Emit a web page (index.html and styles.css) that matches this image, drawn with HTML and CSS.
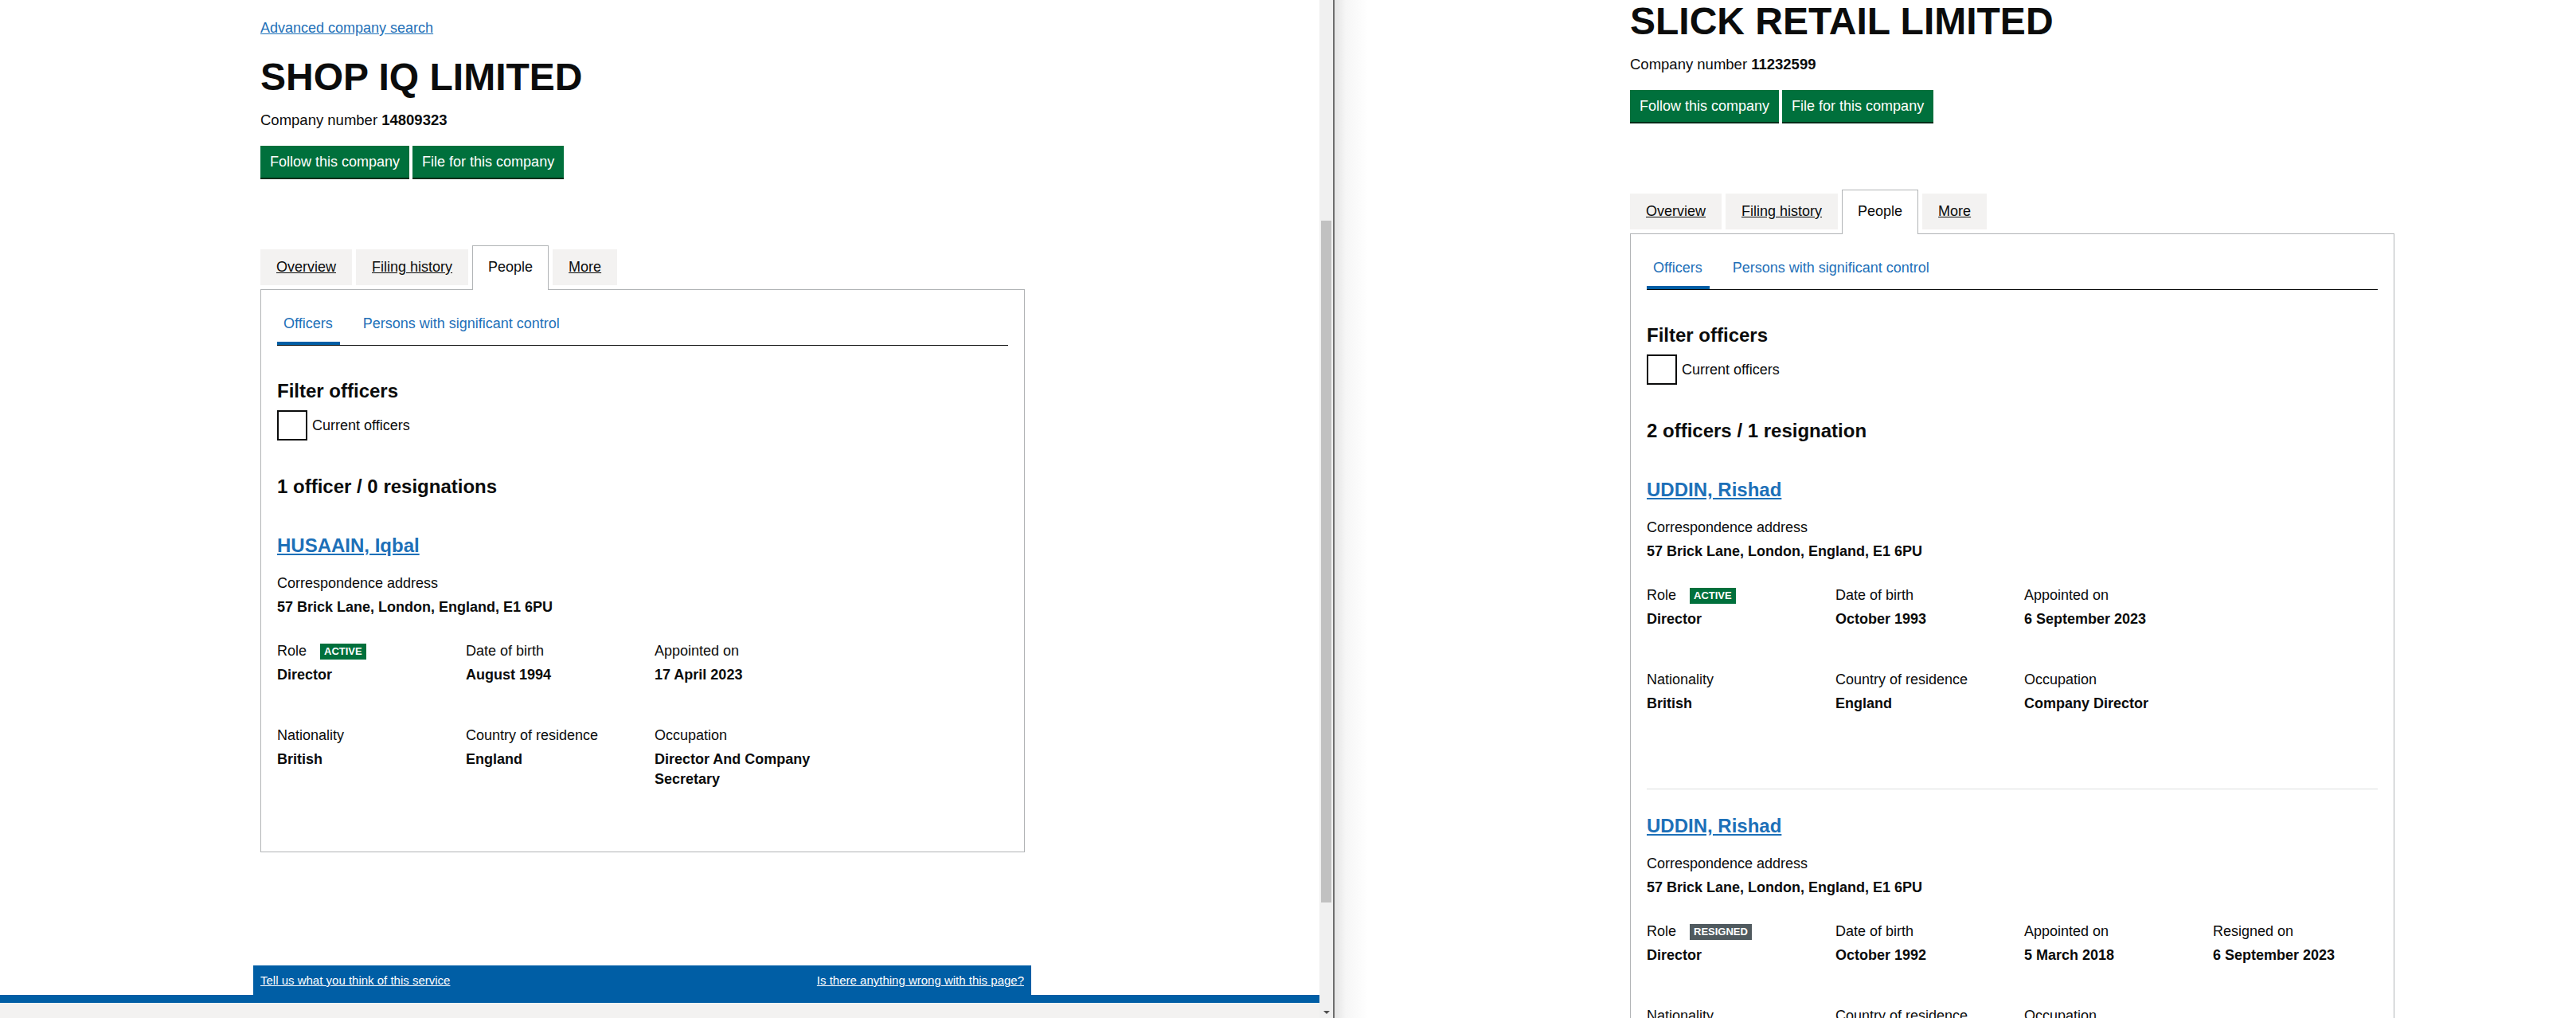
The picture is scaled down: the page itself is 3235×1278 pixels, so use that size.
FILE: index.html
```html
<!DOCTYPE html>
<html lang="en">
<head>
    <meta charset="UTF-8">
    <meta name="viewport" content="width=device-width, initial-scale=1.0">
    <title>People - Companies House</title>
    <link rel="stylesheet" href="styles.css">
</head>
<body>
<div class="screen">

    <!-- Left window: SHOP IQ LIMITED -->
    <div class="pane pane-left">
        <main class="page">
            <a class="back-link" href="#">Advanced company search</a>
            <h1 class="company-name">SHOP IQ LIMITED</h1>
            <p class="company-number">Company number <strong>14809323</strong></p>
            <div class="actions">
                <a class="button" href="#">Follow this company</a>
                <a class="button" href="#">File for this company</a>
            </div>

            <ul class="tabs">
                <li class="tab"><a href="#">Overview</a></li>
                <li class="tab"><a href="#">Filing history</a></li>
                <li class="tab tab-selected">People</li>
                <li class="tab"><a href="#">More</a></li>
            </ul>

            <div class="panel">
                <ul class="subnav">
                    <li class="subnav-item subnav-selected">Officers</li>
                    <li class="subnav-item">Persons with significant control</li>
                </ul>

                <h2 class="heading-m filter-heading">Filter officers</h2>
                <label class="checkbox">
                    <span class="checkbox-box"></span>
                    <span class="checkbox-label">Current officers</span>
                </label>

                <h2 class="heading-m count-heading">1 officer / 0 resignations</h2>

                <div class="officer">
                    <h3 class="officer-name"><a href="#">HUSAAIN, Iqbal</a></h3>
                    <div class="field address">
                        <div class="field-label">Correspondence address</div>
                        <div class="field-value">57 Brick Lane, London, England, E1 6PU</div>
                    </div>
                    <div class="details-row">
                        <div class="field">
                            <div class="field-label">Role <span class="tag tag-active">Active</span></div>
                            <div class="field-value">Director</div>
                        </div>
                        <div class="field">
                            <div class="field-label">Date of birth</div>
                            <div class="field-value">August 1994</div>
                        </div>
                        <div class="field">
                            <div class="field-label">Appointed on</div>
                            <div class="field-value">17 April 2023</div>
                        </div>
                    </div>
                    <div class="details-row">
                        <div class="field">
                            <div class="field-label">Nationality</div>
                            <div class="field-value">British</div>
                        </div>
                        <div class="field">
                            <div class="field-label">Country of residence</div>
                            <div class="field-value">England</div>
                        </div>
                        <div class="field">
                            <div class="field-label">Occupation</div>
                            <div class="field-value">Director And Company Secretary</div>
                        </div>
                    </div>
                </div>
            </div>
        </main>

        <footer class="footer">
            <div class="feedback">
                <a href="#">Tell us what you think of this service</a>
                <a href="#">Is there anything wrong with this page?</a>
            </div>
            <div class="footer-rule"></div>
            <div class="footer-base"></div>
        </footer>
    </div>

    <div class="scrollbar">
        <div class="scrollbar-thumb"></div>
        <div class="scrollbar-arrow"></div>
    </div>
    <div class="divider"></div>

    <!-- Right window: SLICK RETAIL LIMITED, scrolled a little -->
    <div class="pane pane-right">
        <main class="page page-scrolled">
            <a class="back-link" href="#">Advanced company search</a>
            <h1 class="company-name">SLICK RETAIL LIMITED</h1>
            <p class="company-number">Company number <strong>11232599</strong></p>
            <div class="actions">
                <a class="button" href="#">Follow this company</a>
                <a class="button" href="#">File for this company</a>
            </div>

            <ul class="tabs">
                <li class="tab"><a href="#">Overview</a></li>
                <li class="tab"><a href="#">Filing history</a></li>
                <li class="tab tab-selected">People</li>
                <li class="tab"><a href="#">More</a></li>
            </ul>

            <div class="panel">
                <ul class="subnav">
                    <li class="subnav-item subnav-selected">Officers</li>
                    <li class="subnav-item">Persons with significant control</li>
                </ul>

                <h2 class="heading-m filter-heading">Filter officers</h2>
                <label class="checkbox">
                    <span class="checkbox-box"></span>
                    <span class="checkbox-label">Current officers</span>
                </label>

                <h2 class="heading-m count-heading">2 officers / 1 resignation</h2>

                <div class="officer">
                    <h3 class="officer-name"><a href="#">UDDIN, Rishad</a></h3>
                    <div class="field address">
                        <div class="field-label">Correspondence address</div>
                        <div class="field-value">57 Brick Lane, London, England, E1 6PU</div>
                    </div>
                    <div class="details-row">
                        <div class="field">
                            <div class="field-label">Role <span class="tag tag-active">Active</span></div>
                            <div class="field-value">Director</div>
                        </div>
                        <div class="field">
                            <div class="field-label">Date of birth</div>
                            <div class="field-value">October 1993</div>
                        </div>
                        <div class="field">
                            <div class="field-label">Appointed on</div>
                            <div class="field-value">6 September 2023</div>
                        </div>
                    </div>
                    <div class="details-row">
                        <div class="field">
                            <div class="field-label">Nationality</div>
                            <div class="field-value">British</div>
                        </div>
                        <div class="field">
                            <div class="field-label">Country of residence</div>
                            <div class="field-value">England</div>
                        </div>
                        <div class="field">
                            <div class="field-label">Occupation</div>
                            <div class="field-value">Company Director</div>
                        </div>
                    </div>
                </div>

                <div class="officer">
                    <h3 class="officer-name"><a href="#">UDDIN, Rishad</a></h3>
                    <div class="field address">
                        <div class="field-label">Correspondence address</div>
                        <div class="field-value">57 Brick Lane, London, England, E1 6PU</div>
                    </div>
                    <div class="details-row">
                        <div class="field">
                            <div class="field-label">Role <span class="tag tag-resigned">Resigned</span></div>
                            <div class="field-value">Director</div>
                        </div>
                        <div class="field">
                            <div class="field-label">Date of birth</div>
                            <div class="field-value">October 1992</div>
                        </div>
                        <div class="field">
                            <div class="field-label">Appointed on</div>
                            <div class="field-value">5 March 2018</div>
                        </div>
                        <div class="field">
                            <div class="field-label">Resigned on</div>
                            <div class="field-value">6 September 2023</div>
                        </div>
                    </div>
                    <div class="details-row">
                        <div class="field">
                            <div class="field-label">Nationality</div>
                            <div class="field-value">British</div>
                        </div>
                        <div class="field">
                            <div class="field-label">Country of residence</div>
                            <div class="field-value">England</div>
                        </div>
                        <div class="field">
                            <div class="field-label">Occupation</div>
                            <div class="field-value">Company Director</div>
                        </div>
                    </div>
                </div>
            </div>
        </main>
    </div>

</div>
</body>
</html>
```

FILE: styles.css
```css
* {
    box-sizing: border-box;
}
html, body {
    margin: 0;
    padding: 0;
    height: 1278px;
    overflow: hidden;
    background: #fff;
}
body {
    font-family: "Liberation Sans", Arial, sans-serif;
    font-size: 18px;
    line-height: 25px;
    color: #0b0c0c;
}
a {
    color: #1d70b8;
}
ul {
    list-style: none;
    margin: 0;
    padding: 0;
}
h1, h2, h3, p {
    margin: 0;
}

.screen {
    display: flex;
    height: 1278px;
}
.pane {
    height: 1278px;
    overflow: hidden;
}
.pane-left {
    width: 1657px;
    flex: none;
    display: flex;
    flex-direction: column;
}
.pane-left .page {
    flex: 1;
    overflow: hidden;
    margin-left: 327px;
}
.pane-right {
    flex: 1;
    background: linear-gradient(to right, #e4e4e4 0, #f6f6f6 14px, #fff 42px);
}
.pane-right .page {
    margin-left: 371px;
}

/* window chrome between the two panes */
.scrollbar {
    width: 17px;
    flex: none;
    background: #f0f0f0;
    display: flex;
    flex-direction: column;
}
.scrollbar-thumb {
    margin: 277px 2px 0 2px;
    height: 856px;
    background: #c1c1c1;
}
.scrollbar-arrow {
    margin: auto auto 5px;
    width: 0;
    height: 0;
    border-top: 4px solid #505050;
    border-left: 4px solid transparent;
    border-right: 4px solid transparent;
}
.divider {
    width: 2px;
    flex: none;
    background: #6e6e6e;
}

/* page */
.page {
    width: 960px;
    padding-top: 23px;
}
.page-scrolled {
    margin-top: -70px;
}
.back-link {
    display: inline-block;
    font-size: 18px;
    line-height: 25px;
}
.company-name {
    margin-top: 24px;
    font-size: 48px;
    line-height: 50px;
    font-weight: 700;
}
.company-number {
    margin-top: 16px;
    font-size: 18.5px;
}
.actions {
    display: flex;
    gap: 4px;
    margin-top: 20px;
}
.button {
    display: inline-block;
    height: 40px;
    padding: 9px 12px;
    font-size: 18px;
    line-height: 22px;
    color: #fff;
    text-decoration: none;
    background: #00703c;
    box-shadow: 0 2px 0 #002d18;
}

.tabs {
    display: flex;
    align-items: flex-start;
    margin-top: 90px;
}
.tab {
    margin-right: 5px;
    padding: 10px 20px;
    background: #f3f2f1;
}
.tab a {
    color: #0b0c0c;
}
.tab-selected {
    position: relative;
    z-index: 1;
    margin-top: -5px;
    margin-bottom: -1px;
    padding: 14px 19px 16px;
    border: 1px solid #b1b4b6;
    border-bottom: 0;
    background: #fff;
}

.panel {
    border: 1px solid #b1b4b6;
    padding: 30px 20px;
    background: #fff;
}
.subnav {
    display: flex;
    border-bottom: 1px solid #0b0c0c;
}
.subnav-item {
    margin-right: 20px;
    padding: 0 9px 10px;
    border-bottom: 4px solid transparent;
    color: #1d70b8;
}
.subnav-selected {
    padding: 0 9px 10px 8px;
    border-bottom-color: #005ea5;
}

.heading-m {
    font-size: 24px;
    line-height: 30px;
    font-weight: 700;
}
.filter-heading {
    margin-top: 42px;
}
.checkbox {
    display: flex;
    align-items: center;
    margin-top: 9px;
}
.checkbox-box {
    width: 38px;
    height: 38px;
    border: 2px solid #0b0c0c;
}
.checkbox-label {
    margin-left: 6px;
}
.count-heading {
    margin-top: 43px;
}

/* officer list */
.officer {
    margin-top: 44px;
    padding-bottom: 94px;
    border-bottom: 1px solid #dcdedf;
}
.officer + .officer {
    margin-top: 31px;
}
.officer:last-child {
    padding-bottom: 48px;
    border-bottom: 0;
}
.officer-name {
    font-size: 24px;
    line-height: 30px;
    font-weight: 700;
}
.field-value {
    margin-top: 5px;
    font-weight: 700;
}
.address {
    margin-top: 20px;
}
.details-row {
    display: grid;
    grid-template-columns: 237px 237px 237px 1fr;
    margin-top: 30px;
}
.details-row + .details-row {
    margin-top: 51px;
}
.details-row .field {
    padding-right: 20px;
}
.tag {
    display: inline-block;
    margin-left: 12px;
    padding: 3px 5px;
    font-size: 13px;
    line-height: 14px;
    font-weight: 700;
    text-transform: uppercase;
    color: #fff;
    vertical-align: 1px;
}
.tag-active {
    background: #00703c;
}
.tag-resigned {
    background: #505a5f;
}

/* footer of the left window */
.footer {
    flex: none;
    display: flex;
    flex-direction: column;
    height: 66px;
}
.feedback {
    display: flex;
    justify-content: space-between;
    align-items: center;
    width: 977px;
    height: 37px;
    margin-left: 318px;
    padding: 0 9px;
    background: #005ea5;
    font-size: 15px;
}
.feedback a {
    color: #fff;
}
.footer-rule {
    height: 10px;
    background: #005ea5;
}
.footer-base {
    flex: 1;
    background: #f3f2f1;
}
```
